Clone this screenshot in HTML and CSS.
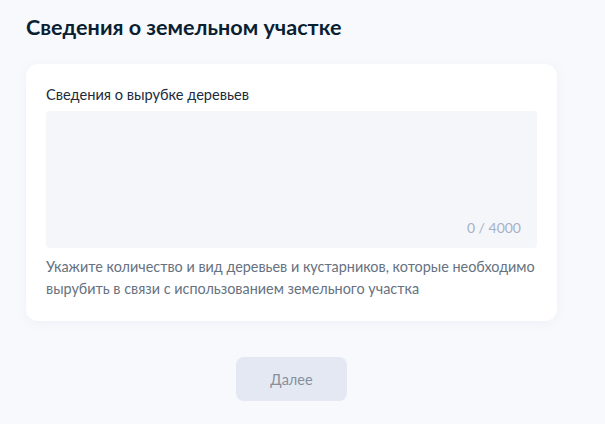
FILE: index.html
```html
<!DOCTYPE html>
<html lang="ru">
<head>
<meta charset="utf-8">
<link rel="stylesheet" href="styles.css">
</head>
<body>
<main class="page">
  <h1 class="title">Сведения о земельном участке</h1>
  <section class="card">
    <label class="label" for="trees">Сведения о вырубке деревьев</label>
    <div class="textarea">
      <textarea id="trees" class="field"></textarea>
      <span class="counter">0 / 4000</span>
    </div>
    <p class="hint">Укажите количество и вид деревьев и кустарников, которые необходимо вырубить в связи с использованием земельного участка</p>
  </section>
  <div class="actions">
    <button class="btn" type="button" disabled>Далее</button>
  </div>
</main>
</body>
</html>
```

FILE: styles.css
```css
* { box-sizing: border-box; }
html, body {
  margin: 0;
  background: #f8f9fd;
  font-family: Lato, "Noto Sans", sans-serif;
  color: #0b1f33;
}
.page {
  width: 531px;
  margin-left: 26px;
  padding-top: 12px;
}
.title {
  margin: 0;
  font-size: 21.6px;
  line-height: 30px;
  font-weight: 700;
  color: #0b1f33;
}
.card {
  margin-top: 22px;
  background: #fff;
  border-radius: 12px;
  padding: 21px 20px 21px;
  box-shadow: 0 2px 12px rgba(86, 105, 143, 0.06);
  display: flex;
  flex-direction: column;
}
.label {
  font-size: 14.6px;
  line-height: 20px;
  color: #1b2b3d;
  margin-bottom: 6px;
}
.textarea {
  position: relative;
  height: 137px;
  background: #f5f6fa;
  border-radius: 4px;
}
.field {
  width: 100%;
  height: 100%;
  border: 0;
  background: transparent;
  resize: none;
  outline: none;
  font: inherit;
}
.counter {
  position: absolute;
  right: 16px;
  bottom: 10px;
  font-size: 14px;
  line-height: 20px;
  color: #a6b1c6;
}
.hint {
  margin: 8px -6px 0 0;
  font-size: 14.4px;
  line-height: 22px;
  color: #66727f;
}
.actions {
  display: flex;
  justify-content: center;
  margin-top: 36px;
}
.btn {
  width: 111px;
  height: 44px;
  border: 0;
  border-radius: 8px;
  background: #e4e8f2;
  color: #86909c;
  font-family: inherit;
  font-size: 14.5px;
}
```
